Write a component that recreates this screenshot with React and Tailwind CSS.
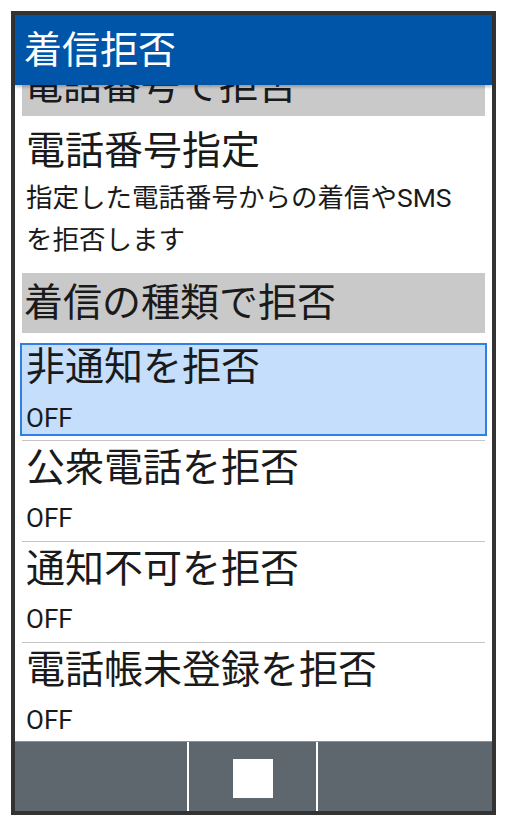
import React from 'react';

const rows = [
  { title: '非通知を拒否', value: 'OFF', selected: true },
  { title: '公衆電話を拒否', value: 'OFF' },
  { title: '通知不可を拒否', value: 'OFF' },
  { title: '電話帳未登録を拒否', value: 'OFF' },
];

const font = { fontFamily: '"Roboto", "Noto Sans CJK JP", sans-serif' };

const Section = ({ label, className = '' }) => (
  <div className={`mx-[7px] h-[60px] shrink-0 bg-[#c9c9c9] pl-[2px] flex items-center text-[39px] leading-none text-[#1a1a1a] ${className}`}>
    {label}
  </div>
);

const Row = ({ title, value, selected }) => {
  if (selected) {
    return (
      <div className="shrink-0 h-[108px] pt-[10px] mx-[7px] border-b border-[#c4c4c4]">
        <div className="-mx-[2px] h-[93px] border-2 border-[#2f80e2] bg-[#c5defc] pl-[4px]">
          <div className="text-[39px] leading-[44px] text-[#1a1a1a]">{title}</div>
          <div className="mt-[12px] text-[26px] leading-[34px] text-[#1a1a1a]">{value}</div>
        </div>
      </div>
    );
  }
  return (
    <div className="shrink-0 h-[101px] mx-[7px] pl-[4px] pt-[4px] border-b border-[#c4c4c4]">
      <div className="text-[39px] leading-[46px] text-[#1a1a1a]">{title}</div>
      <div className="mt-[10px] text-[26px] leading-[34px] text-[#1a1a1a]">{value}</div>
    </div>
  );
};

export default function App() {
  return (
    <div className="w-[507px] h-[826px] bg-white" style={font}>
      <div className="ml-[11px] mt-[11px] w-[485px] h-[804px] border-4 border-[#333333] flex flex-col bg-white">
        {/* Header */}
        <div className="relative z-10 h-[70px] shrink-0 bg-[#0055a8] pl-[9px] flex items-center text-[38px] text-white shadow-[0_2px_3px_rgba(0,0,0,0.25)]">
          着信拒否
        </div>

        {/* Scrolled list */}
        <div className="flex-1 overflow-hidden flex flex-col">
          <Section label="電話番号で拒否" className="-mt-[29px]" />
          <div className="shrink-0 h-[157px] pl-[11px] pt-[11px] text-[#1a1a1a]">
            <div className="text-[39px] leading-[48px]">電話番号指定</div>
            <div className="mt-[2px] text-[26.5px] leading-[42px]">
              指定した電話番号からの着信やSMS
              <br />
              を拒否します
            </div>
          </div>
          <Section label="着信の種類で拒否" />
          {rows.map((r) => (
            <Row key={r.title} {...r} />
          ))}
        </div>

        {/* Bottom soft keys */}
        <div className="h-[70px] shrink-0 bg-[#5f676e] border-t border-[#8b9197] flex">
          <div className="w-[172px]" />
          <div className="w-[131px] border-l-2 border-r-2 border-white flex items-center justify-center">
            <div className="w-[40px] h-[39px] bg-white mt-[4px]" />
          </div>
          <div className="flex-1" />
        </div>
      </div>
    </div>
  );
}
